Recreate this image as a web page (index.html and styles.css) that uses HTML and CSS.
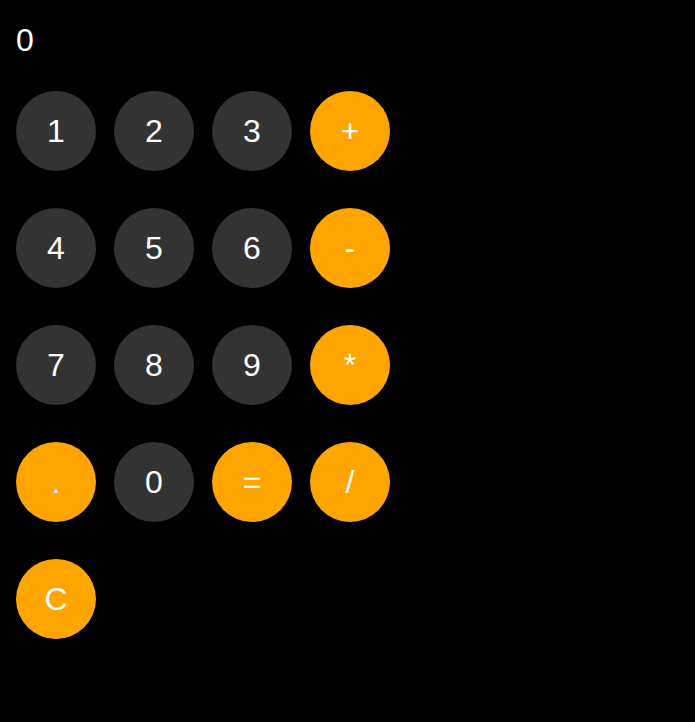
FILE: index.html
```html
<!DOCTYPE html>
<html>
<head>
<meta charset="utf-8">
<link rel="stylesheet" href="styles.css">
</head>
<body>
<div class="calc">
  <div class="display">0</div>
  <div class="keys">
    <button class="key num">1</button>
    <button class="key num">2</button>
    <button class="key num">3</button>
    <button class="key op">+</button>
    <button class="key num">4</button>
    <button class="key num">5</button>
    <button class="key num">6</button>
    <button class="key op">-</button>
    <button class="key num">7</button>
    <button class="key num">8</button>
    <button class="key num">9</button>
    <button class="key op">*</button>
    <button class="key op">.</button>
    <button class="key num">0</button>
    <button class="key op">=</button>
    <button class="key op">/</button>
    <button class="key op">C</button>
  </div>
</div>
</body>
</html>
```
FILE: styles.css
```css
html, body {
  margin: 0;
  background: #000;
}
body {
  font-family: "Liberation Sans", Arial, sans-serif;
  color: #fff;
}
.calc {
  padding: 22px 16px;
}
.display {
  font-size: 32px;
  line-height: 37px;
  height: 37px;
}
.keys {
  margin-top: 32px;
  display: grid;
  grid-template-columns: repeat(4, 80px);
  column-gap: 18px;
  row-gap: 37px;
}
.key {
  width: 80px;
  height: 80px;
  border: none;
  border-radius: 50%;
  padding: 0;
  font-family: "Liberation Sans", Arial, sans-serif;
  font-size: 32px;
  color: #fff;
}
.num {
  background: #333333;
}
.op {
  background: #ffa500;
}
```
